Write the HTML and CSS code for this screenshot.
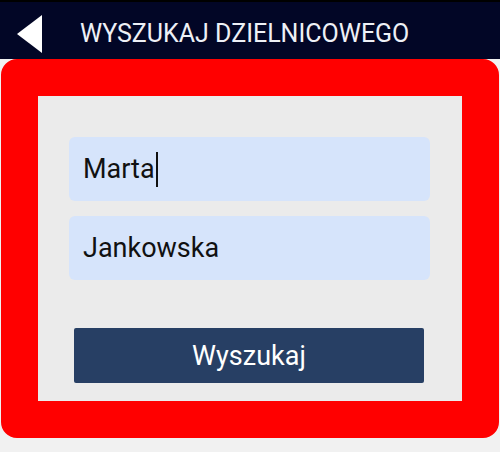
FILE: index.html
```html
<!DOCTYPE html>
<html lang="pl">
<head>
    <meta charset="UTF-8">
    <meta name="viewport" content="width=device-width, initial-scale=1.0">
    <title>Wyszukaj dzielnicowego</title>
    <link rel="stylesheet" href="styles.css">
</head>
<body>
    <div class="topbar">
        <div class="back">
            <svg width="26" height="38" viewBox="0 0 26 38"><polygon points="25,0 25,38 0,19" fill="#fff"/></svg>
        </div>
        <h1 class="title">WYSZUKAJ DZIELNICOWEGO</h1>
    </div>

    <div class="frame">
        <div class="panel">
            <div class="field">Marta<span class="caret"></span></div>
            <div class="field">Jankowska</div>
            <button class="btn">Wyszukaj</button>
        </div>
    </div>
</body>
</html>
```

FILE: styles.css
```css
* {
    box-sizing: border-box;
}
body {
    margin: 0;
    background-color: #f1f1f1;
    font-family: Roboto, 'Liberation Sans', sans-serif;
}
.topbar {
    height: 59px;
    background-color: #020626;
    border-top: 2px solid #000;
    padding-top: 6px;
    display: flex;
    align-items: center;
}
.back {
    width: 80px;
    padding-left: 17px;
    display: flex;
    align-items: center;
}
.title {
    margin: 0;
    color: #eef0f6;
    font-size: 25px;
    font-weight: normal;
}
.frame {
    margin: 0 1px 0 1px;
    border: 37px solid #ff0000;
    border-radius: 16px;
    background-color: #ebebeb;
}
.panel {
    padding: 41px 32px 18px 31px;
    display: flex;
    flex-direction: column;
}
.field {
    height: 64px;
    background-color: #d6e4fb;
    border-radius: 6px;
    padding-left: 14px;
    display: flex;
    align-items: center;
    font-size: 27px;
    color: #111;
    margin-bottom: 15px;
}
.caret {
    display: inline-block;
    width: 2px;
    height: 35px;
    background-color: #111;
    margin-left: 1px;
}
.btn {
    margin: 33px 6px 0 5px;
    height: 55px;
    border: none;
    border-radius: 2px;
    background-color: #273f64;
    color: #fff;
    font-family: Roboto, 'Liberation Sans', sans-serif;
    font-size: 27px;
}
```
